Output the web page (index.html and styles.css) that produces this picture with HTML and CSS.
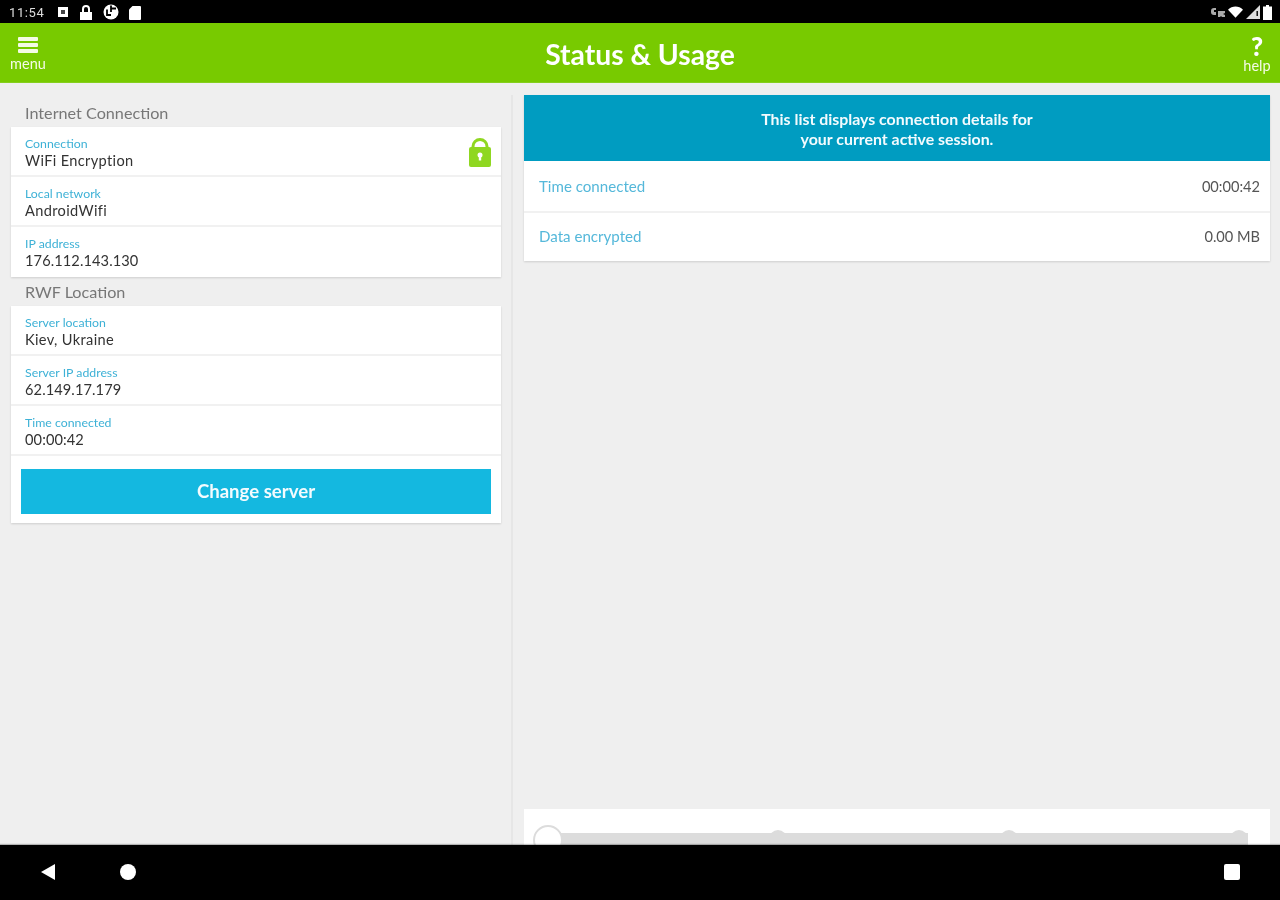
FILE: index.html
```html
<!DOCTYPE html>
<html lang="en">
<head>
<meta charset="utf-8">
<title>Status &amp; Usage</title>
<link rel="stylesheet" href="styles.css">
</head>
<body>
<div class="screen">
  <header class="statusbar">
    <div class="status-left">
      <span class="clock">11:54</span>
      <svg width="12" height="12" viewBox="0 0 12 12"><path fill="#fff" d="M1 1h10v10H1z"/><path fill="#444" d="M4 4h4v4H4z"/></svg>
      <svg width="14" height="17" viewBox="0 0 14 17"><path fill="none" stroke="#fff" stroke-width="2" d="M4 8V5a3 3 0 0 1 6 0v3"/><path fill="#fff" d="M1 8h12v8H1z"/></svg>
      <svg width="16" height="16" viewBox="0 0 16 16"><circle cx="8" cy="8" r="7.500" fill="#fff"/><path fill="none" stroke="#000" stroke-width="1.800" d="M8 1.500V8M8 4.500h5M4 5.500v5.500h4"/></svg>
      <svg width="12" height="15" viewBox="0 0 12 15"><path fill="#fff" d="M3.500 1H11a1 1 0 0 1 1 1v12a1 1 0 0 1-1 1H1a1 1 0 0 1-1-1V4.500z"/></svg>
    </div>
    <div class="status-right">
      <svg width="14" height="9" viewBox="0 0 14 9"><path fill="#aaa" d="M0 3a3 3 0 0 1 3-3h2v2H3v2h2v3H3a3 3 0 0 1-3-3zM7 3h7v2l-2 1 2 1v2h-3l-1-1-1 1H7z"/></svg>
      <svg width="15" height="12" viewBox="0 0 16 12"><path fill="#fff" d="M0 3.500C4.500-1 11.500-1 16 3.500L8 12z"/></svg>
      <svg width="14" height="14" viewBox="0 0 14 14"><path fill="#ddd" d="M14 0v14H0z"/><path fill="#000" d="M10.500 6h1.400v5h-1.400z"/></svg>
      <svg width="9" height="15" viewBox="0 0 9 15"><path fill="#fff" d="M3 0h3v1.500h3V15H0V1.500h3z"/></svg>
    </div>
  </header>

  <nav class="appbar">
    <div class="appbar-btn appbar-menu">
      <span class="burger"><i></i><i></i><i></i></span>
      <span class="appbar-label">menu</span>
    </div>
    <h1 class="title">Status &amp; Usage</h1>
    <div class="appbar-btn appbar-help">
      <span class="question">?</span>
      <span class="appbar-label">help</span>
    </div>
  </nav>

  <main class="content">
    <section class="left">
      <h2 class="heading">Internet Connection</h2>
      <div class="card">
        <div class="row">
          <div class="row-text"><span class="label">Connection</span><span class="value">WiFi Encryption</span></div>
          <svg class="lock" width="22" height="31" viewBox="0 0 22 31"><path fill="none" stroke="#8fd721" stroke-width="3" d="M4 13V9.500a7 7 0 0 1 14 0V13"/><rect y="10" width="22" height="20" rx="2" fill="#8fd721"/><circle cx="11" cy="18" r="2.500" fill="#fff"/><path fill="#fff" d="M9.800 18.500h2.400v5H9.800z"/></svg>
        </div>
        <div class="row"><div class="row-text"><span class="label">Local network</span><span class="value">AndroidWifi</span></div></div>
        <div class="row"><div class="row-text"><span class="label">IP address</span><span class="value value-num">176.112.143.130</span></div></div>
      </div>
      <h2 class="heading heading-second">RWF Location</h2>
      <div class="card">
        <div class="row"><div class="row-text"><span class="label">Server location</span><span class="value">Kiev, Ukraine</span></div></div>
        <div class="row"><div class="row-text"><span class="label">Server IP address</span><span class="value value-num">62.149.17.179</span></div></div>
        <div class="row"><div class="row-text"><span class="label">Time connected</span><span class="value value-num">00:00:42</span></div></div>
        <div class="button-wrap"><button class="change" type="button">Change server</button></div>
      </div>
    </section>

    <section class="right">
      <div class="card list">
        <div class="banner">This list displays connection details for<br>your current active session.</div>
        <div class="stat"><span class="stat-name">Time connected</span><span class="stat-value">00:00:42</span></div>
        <div class="stat"><span class="stat-name">Data encrypted</span><span class="stat-value">0.00 MB</span></div>
      </div>
      <div class="slider-card">
        <div class="track">
          <span class="knob"></span>
          <span class="tick"></span>
          <span class="tick"></span>
          <span class="tick"></span>
        </div>
      </div>
    </section>
  </main>

  <footer class="navbar">
    <svg width="16" height="18" viewBox="0 0 16 18"><path fill="#fff" d="M15 1v16L1 9z"/></svg>
    <span class="home"></span>
    <span class="recent"></span>
  </footer>
</div>
</body>
</html>
```

FILE: styles.css
```css
* { box-sizing: border-box; }

html, body {
  margin: 0;
  padding: 0;
  background: #000;
}

.screen {
  width: 1280px;
  height: 900px;
  display: flex;
  flex-direction: column;
  overflow: hidden;
  font-family: Lato, "Open Sans", sans-serif;
  background: #efefef;
  filter: blur(0.5px);
}

.statusbar {
  height: 23px;
  flex: none;
  background: #000;
  color: #ddd;
  display: flex;
  justify-content: space-between;
  align-items: center;
  padding: 1px 8px 0 9px;
}

.status-left,
.status-right {
  display: flex;
  align-items: center;
}

.status-left { gap: 10px; }
.status-right { gap: 3px; }

.clock {
  font: 13px Roboto, sans-serif;
  letter-spacing: 0.6px;
  margin-right: 3px;
}

.appbar {
  height: 60px;
  flex: none;
  background: #78ca00;
  display: grid;
  grid-template-columns: 1fr auto 1fr;
  align-items: center;
  padding: 0 5px;
  border-bottom: 1px solid #85cf1d;
}

.appbar-btn {
  width: 36px;
  display: flex;
  flex-direction: column;
  align-items: center;
  color: #f4fbe6;
}

.appbar-menu { margin-left: 5px; }

.burger {
  width: 20px;
  display: flex;
  flex-direction: column;
  gap: 2px;
  margin-bottom: 4px;
}

.burger i {
  display: block;
  height: 4px;
  background: #f4fbe6;
  border-radius: 1px;
}

.appbar-label {
  font-size: 14.500px;
  line-height: 13px;
}

.question {
  font-size: 26px;
  font-weight: 900;
  line-height: 22px;
  margin-bottom: 2px;
  color: #fff;
}

.appbar-help { justify-self: end; }

.title {
  margin: 0;
  padding-top: 2px;
  color: #fff;
  font-size: 28.300px;
  font-weight: 700;
  line-height: 58px;
}

.content {
  flex: 1;
  min-height: 0;
  display: flex;
}

.left {
  width: 513px;
  flex: none;
  padding: 0 10px 0 11px;
  border-right: 2px solid #e6e6e6;
  margin-top: 12px;
}

.heading {
  margin: 0;
  height: 32px;
  padding: 0 0 0 14px;
  font-size: 16.200px;
  font-weight: 400;
  line-height: 36px;
  color: #777;
}

.heading-second {
  height: 29px;
  line-height: 29px;
}

.card {
  background: #fff;
  box-shadow: 0 1px 2px rgba(0, 0, 0, 0.14);
}

.row {
  height: 50px;
  display: flex;
  justify-content: space-between;
  align-items: center;
  padding: 0 10px 0 14px;
  border-bottom: 2px solid #f1f1f1;
}

.row-text {
  display: flex;
  flex-direction: column;
  margin-top: 4px;
}

.card > .row:last-child { border-bottom: 0; }
.card > .row:last-child .row-text { margin-top: 2px; }

.label {
  font-size: 12.300px;
  line-height: 14px;
  color: #3db1d6;
}

.value {
  font-size: 14.600px;
  line-height: 19px;
  color: #333;
  letter-spacing: 0.35px;
}

.value-num { letter-spacing: 0.1px; }

.lock { margin-top: 2px; }

.button-wrap {
  padding: 13px 10px 9px;
}

.change {
  display: block;
  width: 100%;
  height: 45px;
  border: 0;
  padding: 0 0 2px;
  background: #14b8e0;
  color: #f3fbfe;
  font-family: inherit;
  font-size: 18.600px;
  font-weight: 700;
}

.right {
  flex: 1;
  min-width: 0;
  padding: 12px 10px 0 11px;
  display: flex;
  flex-direction: column;
  justify-content: space-between;
}

.banner {
  height: 66px;
  background: #009cc1;
  color: #f3fbfe;
  font-size: 15.900px;
  font-weight: 700;
  line-height: 20px;
  text-align: center;
  padding-top: 14px;
}

.stat {
  height: 50px;
  display: flex;
  justify-content: space-between;
  align-items: center;
  padding: 0 10px 0 15px;
}

.stat + .stat {
  border-top: 2px solid #f1f1f1;
  padding-bottom: 2px;
}

.stat-name {
  color: #55b8da;
  font-size: 15.100px;
}

.stat-value {
  color: #555;
  font-size: 14.600px;
}

.slider-card {
  height: 36px;
  background: #fff;
  padding: 24px 22px 0 15px;
}

.track {
  height: 30px;
  background: linear-gradient(to right, transparent 20px, #dcdcdc 20px);
  display: flex;
  justify-content: space-between;
  align-items: flex-start;
}

.knob {
  flex: none;
  width: 30px;
  height: 30px;
  margin: -8px -6px 0;
  border-radius: 50%;
  background: #fff;
  border: 2px solid #dcdcdc;
}

.tick {
  flex: none;
  width: 18px;
  height: 18px;
  margin-top: -3px;
  border-radius: 50%;
  background: #dcdcdc;
}

.navbar {
  height: 55px;
  flex: none;
  background: #000;
  display: flex;
  align-items: center;
  padding: 0 40px 1px;
  box-shadow: 0 -1px 1px rgba(0, 0, 0, 0.25);
  position: relative;
}

.home {
  width: 16px;
  height: 16px;
  border-radius: 50%;
  background: #fff;
  margin-left: 64px;
}

.recent {
  width: 16px;
  height: 16px;
  border-radius: 2px;
  background: #fff;
  margin-left: auto;
}
```
